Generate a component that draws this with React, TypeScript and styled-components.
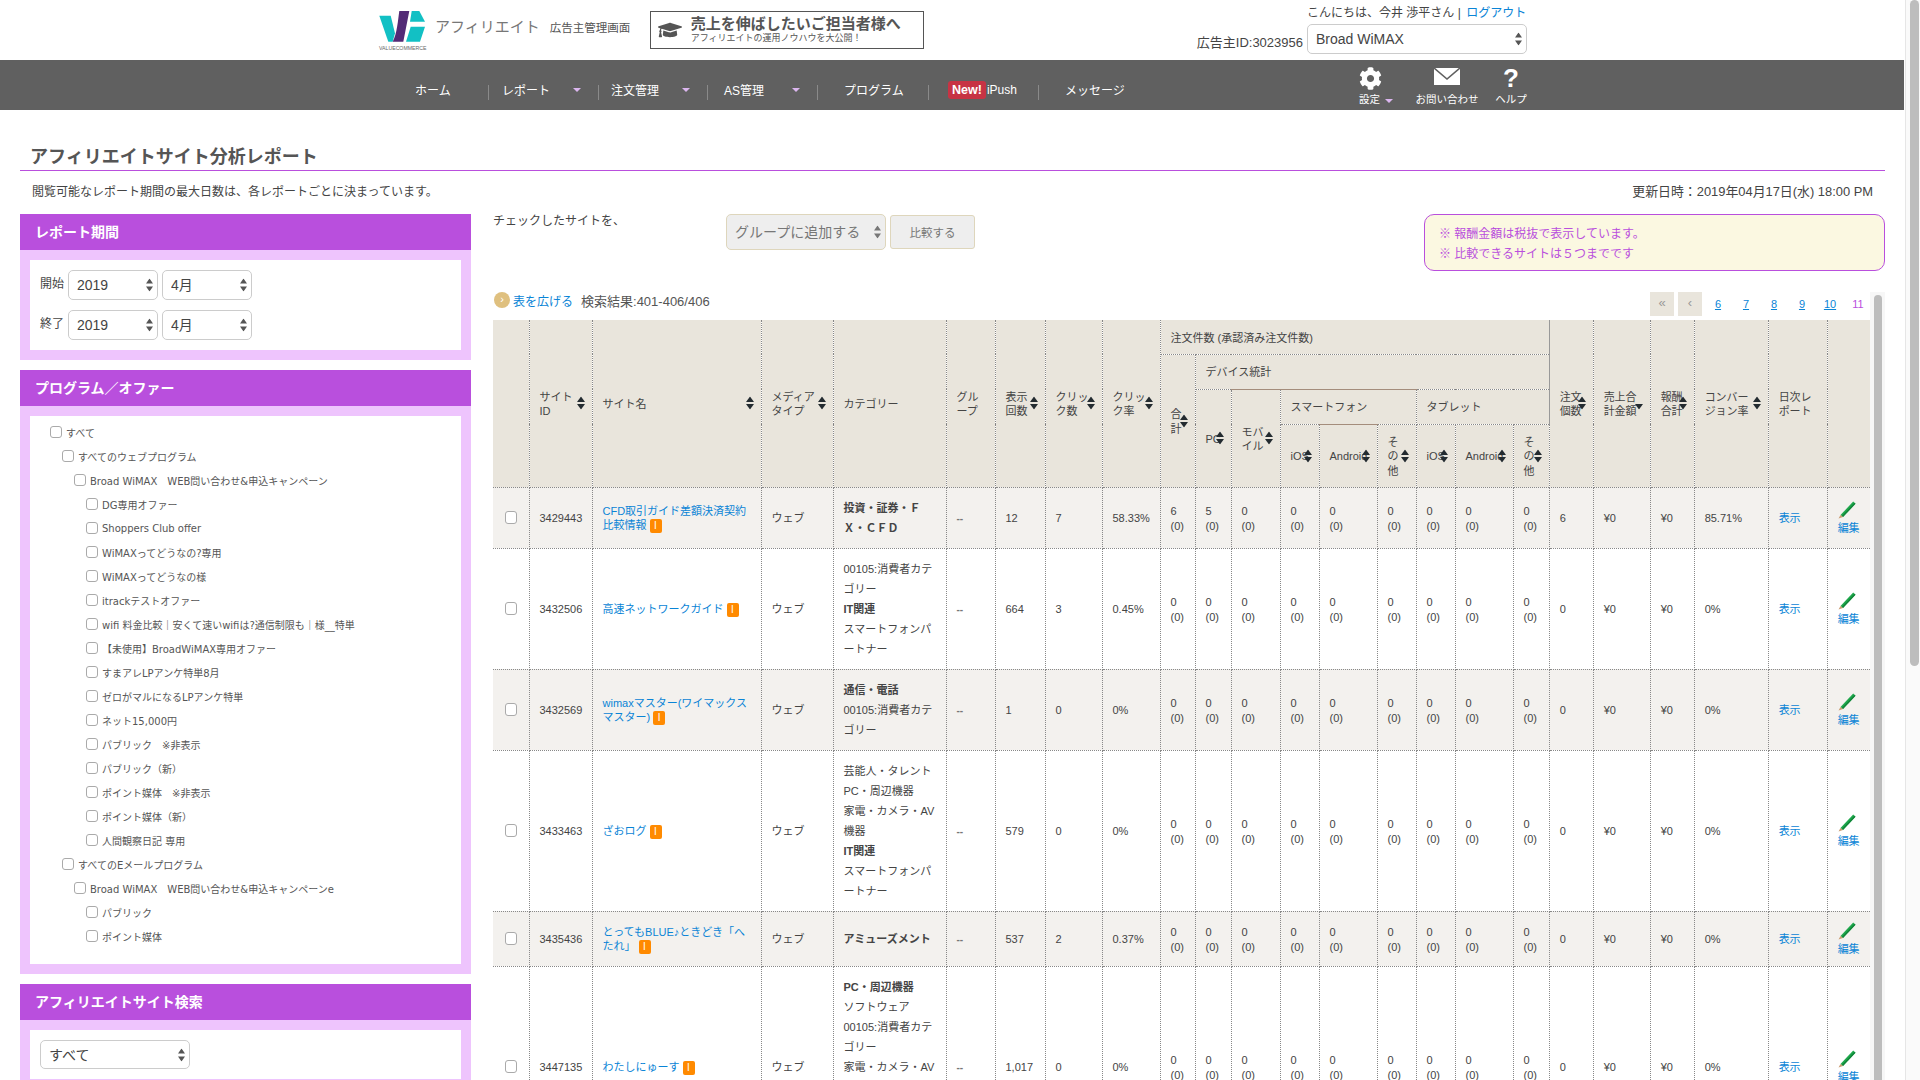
import styled, { createGlobalStyle } from "styled-components";
import { FaCog, FaGraduationCap } from "react-icons/fa";

const GlobalStyle = createGlobalStyle`
    html, body {
        margin: 0;
        padding: 0;
        height: 100%;
        overflow: hidden;
        background: #fff;
        color: #444;
        font-family: "Liberation Sans", "Noto Sans CJK JP", sans-serif;
        font-size: 12px;
    }
    * { box-sizing: border-box; }
    a { color: #0a84d6; text-decoration: none; }
`

const Viewport = styled.div`
    display: flex;
    height: 100vh;
    overflow: hidden;
`

const Page = styled.div`
    width: 1904px;
    flex: none;
`

const PageScroll = styled.div`
    flex: 1;
    margin-left: 1px;
    padding-left: 4px;
    border-left: 1px solid #e6e6e6;
    background: #fafafa;
`

const PageThumb = styled.div`
    width: 9px;
    height: 666px;
    border-radius: 5px;
    background: #bdbdbd;
`

/* header */
const Header = styled.header`
    height: 60px;
    display: flex;
    justify-content: space-between;
    padding: 0 377px 0 378px;
`

const Brand = styled.div`
    display: flex;
    align-items: flex-start;
`

const LogoBox = styled.div`
    width: 50px;
    padding-top: 10px;
    svg { display: block; }
`

const LogoCaption = styled.div`
    font-size: 5.2px;
    line-height: 8px;
    margin: 2px 0 0 1px;
    color: #666;
    white-space: nowrap;
`

const BrandName = styled.div`
    margin: 17px 0 0 7px;
    font-size: 15px;
    line-height: 20px;
    color: #777;
    white-space: nowrap;
`

const BrandSub = styled.div`
    margin: 21px 0 0 10px;
    width: 100px;
    font-size: 11.5px;
    line-height: 14px;
    color: #555;
    white-space: nowrap;
`

const Banner = styled.div`
    width: 274px;
    height: 38px;
    margin-top: 11px;
    display: flex;
    align-items: center;
    gap: 9px;
    padding-left: 7px;
    border: 1px solid #555;
    color: #555;
    svg { font-size: 24px; flex: none; }
`

const BannerTitle = styled.div`
    font-size: 15px;
    line-height: 16px;
    font-weight: bold;
    white-space: nowrap;
`

const BannerSub = styled.div`
    font-size: 9px;
    line-height: 12px;
    white-space: nowrap;
`

const UserBox = styled.div`
    width: 330px;
    display: flex;
    flex-direction: column;
    align-items: flex-end;
    padding-top: 6px;
`

const Greeting = styled.div`
    width: 220px;
    font-size: 12px;
    line-height: 14px;
    white-space: nowrap;
    a { margin-left: 2px; }
`

const AdvertiserRow = styled.div`
    display: flex;
    align-items: flex-end;
    gap: 4px;
    margin-top: 4px;
`

const AdvertiserId = styled.span`
    font-size: 13px;
    line-height: 18px;
    padding-bottom: 2px;
    white-space: nowrap;
`

/* select */
const DropWrap = styled.span<{ $w: number; $muted?: boolean }>`
    position: relative;
    display: inline-block;
    width: ${p => p.$w}px;
    flex: none;
    svg {
        position: absolute;
        right: 5px;
        top: 50%;
        transform: translateY(-50%);
        fill: ${p => p.$muted ? "#777" : "#555"};
    }
`

const DropSelect = styled.select<{ $h: number; $muted?: boolean }>`
    appearance: none;
    display: block;
    width: 100%;
    height: ${p => p.$h}px;
    padding: 0 16px 0 8px;
    font-family: "Liberation Sans", "Noto Sans CJK JP", sans-serif;
    font-size: 14px;
    color: ${p => p.$muted ? "#777" : "#444"};
    background: ${p => p.$muted ? "#eee" : "#fff"};
    border: 1px solid ${p => p.$muted ? "#ded6bc" : "#ccc"};
    border-radius: 5px;
`

function Dropdown(props: { w: number; h: number; value: string; muted?: boolean }) {
    return (
        <DropWrap $w={props.w} $muted={props.muted}>
            <DropSelect $h={props.h} $muted={props.muted} defaultValue={props.value}>
                <option>{props.value}</option>
            </DropSelect>
            <svg width="7" height="13" viewBox="0 0 7 13">
                <path d="M3.5 0L7 5H0zM3.5 13L0 8h7z" />
            </svg>
        </DropWrap>
    )
}

/* nav */
const Nav = styled.nav`
    height: 50px;
    background: #606060;
    color: #fff;
    display: flex;
    align-items: center;
    padding: 0 377px 0 378px;
`

const NavItem = styled.div<{ $w: number; $pad: number; $line?: boolean }>`
    width: ${p => p.$w}px;
    height: 15px;
    margin-top: 14px;
    padding: 0 17px 5px ${p => p.$pad}px;
    display: flex;
    align-items: center;
    justify-content: space-between;
    font-size: 12px;
    white-space: nowrap;
    border-left: ${p => p.$line ? "1px solid #8a8a8a" : "0"};
`

const NavCaret = styled.i`
    width: 0;
    height: 0;
    border-left: 4px solid transparent;
    border-right: 4px solid transparent;
    border-top: 4px solid #dcb6f0;
`

const NewTag = styled.b`
    display: inline-block;
    padding: 0 4px;
    margin-right: 1px;
    line-height: 18px;
    font-size: 12.5px;
    background: #c73344;
    border-radius: 3px;
`

const NavTools = styled.div`
    margin-left: auto;
    display: flex;
    gap: 16px;
`

const Tool = styled.div<{ $w: number; $extra?: number }>`
    width: ${p => p.$w}px;
    height: 42px;
    margin-right: ${p => p.$extra ?? 0}px;
    display: flex;
    flex-direction: column;
    align-items: center;
    justify-content: flex-end;
    font-size: 10.5px;
    line-height: 14px;
    white-space: nowrap;
`

const ToolLabel = styled.span`
    display: flex;
    align-items: center;
    gap: 5px;
    width: 100%;
    i { margin-top: 3px; }
`

const QuestionMark = styled.span`
    font-size: 26px;
    line-height: 27px;
    font-weight: bold;
`

const GearBox = styled.div`
    width: 100%;
    height: 28px;
    padding-top: 3px;
    svg { display: block; font-size: 23px; }
`

const MailIcon = styled.svg`
    margin-bottom: 7px;
`

/* main */
const Main = styled.main`
    padding: 33px 19px 0 20px;
`

const PageTitle = styled.h1`
    margin: 0;
    padding: 2px 0 0 10px;
    height: 28px;
    font-size: 18px;
    line-height: 25px;
    font-weight: bold;
    color: #555;
    border-bottom: 1px solid #b94fdd;
`

const SubRow = styled.div`
    display: flex;
    justify-content: space-between;
    margin: 11px 0 12px;
    padding: 0 12px;
    line-height: 20px;
`

const UpdatedAt = styled.span`
    font-size: 12.9px;
`

const Columns = styled.div`
    display: flex;
    gap: 22px;
    align-items: flex-start;
`

const Side = styled.aside`
    width: 451px;
    flex: none;
`

const Panel = styled.section`
    margin-bottom: 10px;
    background: #eec4fd;
`

const PanelHead = styled.h2`
    margin: 0;
    height: 36px;
    padding-left: 15px;
    background: #b94fdd;
    color: #fff;
    font-size: 14px;
    line-height: 36px;
    font-weight: bold;
`

const PanelFrame = styled.div`
    padding: 10px;
`

const PanelBody = styled.div<{ $pad: string }>`
    padding: ${p => p.$pad};
    background: #fff;
`

const PeriodRow = styled.div`
    display: flex;
    align-items: center;
    gap: 4px;
    margin-bottom: 10px;
    &:last-child { margin-bottom: 0; }
`

const PeriodLabel = styled.span`
    width: 24px;
    font-size: 12px;
    margin-top: -6px;
`

const TreeRow = styled.label<{ $level: number }>`
    display: flex;
    align-items: center;
    gap: 4px;
    height: 24px;
    padding-left: ${p => 20 + p.$level * 12}px;
    font-family: "DejaVu Sans", "Noto Sans CJK JP", sans-serif;
    font-size: 10px;
    color: #555;
    white-space: pre;
`

const Check = styled.input.attrs({ type: "checkbox" })`
    appearance: none;
    width: 12px;
    height: 12px;
    margin: 0;
    flex: none;
    background: #fff;
    border: 1px solid #aaa;
    border-radius: 3px;
`

const Content = styled.div`
    width: 1392px;
    flex: none;
    position: relative;
`

const Toolbar = styled.div`
    display: flex;
    align-items: flex-start;
    height: 57px;
`

const ToolbarText = styled.span`
    width: 233px;
    line-height: 14px;
`

const CompareButton = styled.button`
    width: 85px;
    height: 34px;
    margin: 1px 0 0 4px;
    font-family: inherit;
    font-size: 11.5px;
    color: #777;
    background: #eee;
    border: 1px solid #ded6bc;
    border-radius: 3px;
`

const Notice = styled.div`
    width: 461px;
    height: 57px;
    margin-left: auto;
    padding: 9px 14px;
    line-height: 20px;
    color: #b94fdd;
    background: #fbf8e1;
    border: 1px solid #b94fdd;
    border-radius: 10px;
`

const ResultRow = styled.div`
    width: 1379px;
    height: 24px;
    margin: 21px 0 4px;
    display: flex;
    align-items: center;
`

const ResultInfo = styled.div`
    display: flex;
    align-items: center;
    margin-bottom: 8px;
`

const ExpandIcon = styled.span`
    width: 16px;
    height: 16px;
    margin: 0 3px 0 1px;
    border-radius: 50%;
    background: #dfc07f;
    color: #fff;
    font-size: 11px;
    line-height: 14px;
    text-align: center;
`

const ResultCount = styled.span`
    margin-left: 8px;
    font-size: 13px;
    color: #555;
`

const Pager = styled.div`
    margin-left: auto;
    display: flex;
    align-items: center;
    font-size: 11px;
`

const PagerBox = styled.span`
    width: 24px;
    height: 24px;
    margin-right: 4px;
    background: #e9e5dc;
    color: #999;
    font-size: 13px;
    line-height: 22px;
    text-align: center;
    &:nth-child(2) { margin-right: 2px; }
`

const PagerLink = styled.a<{ $current?: boolean }>`
    width: 28px;
    text-align: center;
    color: ${p => p.$current ? "#b94fdd" : "#0a84d6"};
    span { text-decoration: ${p => p.$current ? "none" : "underline"}; }
`

const InnerScroll = styled.div`
    position: absolute;
    left: 1377px;
    top: 78px;
    width: 15px;
    height: 900px;
    padding-left: 4px;
    background: #f7f7f7;
`

const InnerThumb = styled.div`
    width: 8px;
    height: 100%;
    margin-top: 3px;
    border-radius: 4px;
    background: #bdbdbd;
`

/* table */
const Table = styled.table`
    width: 1377px;
    table-layout: fixed;
    border-collapse: collapse;
    font-size: 11px;
    line-height: 14.3px;
    line-break: loose;
`

const Th = styled.th<{ $solidTop?: boolean; $solidRight?: boolean }>`
    position: relative;
    padding: 10px 10px 8px;
    text-align: left;
    font-weight: normal;
    background: #e9e5dc;
    color: #444;
    border: 1px dotted #888;
    border-top: ${p => p.$solidTop ? "1px solid #a48d7c" : "1px dotted #888"};
    border-right: ${p => p.$solidRight ? "1px solid #999" : "1px dotted #888"};
    thead tr:first-child & { border-top: 0; }
    &:first-child { border-left: 0; }
`

const HeadRow = styled.tr<{ $h: number }>`
    height: ${p => p.$h}px;
`

const SortMark = styled.svg`
    position: absolute;
    right: 7px;
    top: 50%;
    transform: translateY(-50%);
`

const Tr = styled.tr<{ $alt: boolean }>`
    background: ${p => p.$alt ? "#f3f1ee" : "#fff"};
    &:first-child td { border-top: 1px dotted #8a7060; }
`

const Td = styled.td`
    padding: 11px 10px 9px;
    vertical-align: middle;
    border: 1px dotted #888;
    color: #444;
    &:first-child { border-left: 0; }
    &:last-child { border-right: 1px solid #f0f0f0; }
`

const CheckTd = styled(Td)`
    padding: 0 0 0 12px;
    input { display: block; height: 13px; }
`

const CategoryTd = styled(Td)`
    padding: 10px;
`

const EditTd = styled(Td)`
    padding: 10px 2px 10px 10px;
`

const CategoryLine = styled.div<{ $bold?: boolean }>`
    line-height: 20px;
    font-weight: ${p => p.$bold ? "bold" : "normal"};
`

const DashText = styled.span`
    font-weight: bold;
    color: #777;
    font-size: 10px;
`

const InfoBadge = styled.span`
    display: inline-block;
    width: 12px;
    height: 14px;
    margin-left: 3px;
    background: #ff8a00;
    color: #fff;
    border-radius: 2px;
    font-size: 10px;
    line-height: 14px;
    text-align: center;
    vertical-align: middle;
`

const EditIcon = styled.div`
    height: 20px;
    svg { display: block; }
`

const EditLink = styled.a`
    display: block;
    line-height: 14px;
    white-space: nowrap;
`

interface Row {
    id: string;
    name: string;
    category: [string, boolean][];
    views: string;
    clicks: string;
    rate: string;
    counts: [string, string][];
    orders: string;
    cv: string;
}

const zeros = (): [string, string][] => Array.from({ length: 9 }, () => ["0", "(0)"])

const rows: Row[] = [
    {
        id: "3429443", name: "CFD取引ガイド差額決済契約比較情報",
        category: [["投資・証券・ＦＸ・ＣＦＤ", true]],
        views: "12", clicks: "7", rate: "58.33%",
        counts: [["6", "(0)"], ["5", "(0)"], ...zeros().slice(2)],
        orders: "6", cv: "85.71%",
    },
    {
        id: "3432506", name: "高速ネットワークガイド",
        category: [["00105:消費者カテゴリー", false], ["IT関連", true], ["スマートフォンパートナー", false]],
        views: "664", clicks: "3", rate: "0.45%", counts: zeros(), orders: "0", cv: "0%",
    },
    {
        id: "3432569", name: "wimaxマスター(ワイマックスマスター)",
        category: [["通信・電話", true], ["00105:消費者カテゴリー", false]],
        views: "1", clicks: "0", rate: "0%", counts: zeros(), orders: "0", cv: "0%",
    },
    {
        id: "3433463", name: "ざおログ",
        category: [["芸能人・タレント", false], ["PC・周辺機器", false], ["家電・カメラ・AV機器", false], ["IT関連", true], ["スマートフォンパートナー", false]],
        views: "579", clicks: "0", rate: "0%", counts: zeros(), orders: "0", cv: "0%",
    },
    {
        id: "3435436", name: "とってもBLUE♪ときどき「へたれ」",
        category: [["アミューズメント", true]],
        views: "537", clicks: "2", rate: "0.37%", counts: zeros(), orders: "0", cv: "0%",
    },
    {
        id: "3447135", name: "わたしにゅーす",
        category: [["PC・周辺機器", true], ["ソフトウェア", false], ["00105:消費者カテゴリー", false], ["家電・カメラ・AV機器", false], ["IT関連", true], ["スマートフォンパートナー", false]],
        views: "1,017", clicks: "0", rate: "0%", counts: zeros(), orders: "0", cv: "0%",
    },
]

const colWidths = [36, 63, 169, 72, 113, 49, 50, 57, 58, 35, 36, 49, 39, 58, 39, 39, 58, 36, 44, 57, 44, 74, 59, 43]

const programs: [number, string][] = [
    [0, "すべて"],
    [1, "すべてのウェブプログラム"],
    [2, "Broad WiMAX　WEB問い合わせ&申込キャンペーン"],
    [3, "DG専用オファー"],
    [3, "Shoppers Club offer"],
    [3, "WiMAXってどうなの?専用"],
    [3, "WiMAXってどうなの様"],
    [3, "itrackテストオファー"],
    [3, "wifi 料金比較｜安くて速いwifiは?通信制限も｜様__特単"],
    [3, "【未使用】BroadWiMAX専用オファー"],
    [3, "すまアレLPアンケ特単8月"],
    [3, "ゼロがマルになるLPアンケ特単"],
    [3, "ネット15,000円"],
    [3, "パブリック　※非表示"],
    [3, "パブリック（新）"],
    [3, "ポイント媒体　※非表示"],
    [3, "ポイント媒体（新）"],
    [3, "人間観察日記 専用"],
    [1, "すべてのEメールプログラム"],
    [2, "Broad WiMAX　WEB問い合わせ&申込キャンペーンe"],
    [3, "パブリック"],
    [3, "ポイント媒体"],
]

function HeadCell(props: {
    label?: string;
    rows?: number;
    cols?: number;
    sort?: "both" | "down";
    solidTop?: boolean;
    solidRight?: boolean;
}) {
    return (
        <Th rowSpan={props.rows} colSpan={props.cols} $solidTop={props.solidTop} $solidRight={props.solidRight}>
            {props.label}
            {props.sort && (
                <SortMark width="8" height="13" viewBox="0 0 8 13">
                    {props.sort === "both" && <path d="M4 0L8 5.5H0z" fill="#232b30" />}
                    <path d="M4 13L0 7.5h8z" fill="#232b30" />
                </SortMark>
            )}
        </Th>
    )
}

function Pencil() {
    return (
        <svg width="18" height="18" viewBox="0 0 18 18">
            <path d="M2.5 14L15.2.6l2.3 2.2L5 16z" fill="#1ea84c" />
            <path d="M3.8 15L16.4 1.7l1.1 1.1L5 16z" fill="#12863a" />
            <path d="M.5 17.6L2.5 14 5 16z" fill="#c99b70" />
        </svg>
    )
}

function App() {
    return (
        <Viewport>
            <GlobalStyle />
            <Page>
                <Header>
                    <Brand>
                        <LogoBox>
                            <svg width="50" height="32" viewBox="0 0 50 32">
                                <path d="M1.3 5.7H12.7L17 23.3 14.7 31.7H10.3z" fill="#12c0c4" />
                                <path d="M21.3 1H31.3L25.3 31.7H14.7C19 24 20 10 21.3 1z" fill="#532a76" />
                                <path d="M33.7 1H41.3L47 11.7H32z" fill="#12c0c4" />
                                <path d="M32.7 16.7H47L42 31.7H28z" fill="#12c0c4" />
                            </svg>
                            <LogoCaption>VALUECOMMERCE</LogoCaption>
                        </LogoBox>
                        <BrandName>アフィリエイト</BrandName>
                        <BrandSub>広告主管理画面</BrandSub>
                        <Banner>
                            <FaGraduationCap />
                            <div>
                                <BannerTitle>売上を伸ばしたいご担当者様へ</BannerTitle>
                                <BannerSub>アフィリエイトの運用ノウハウを大公開！</BannerSub>
                            </div>
                        </Banner>
                    </Brand>
                    <UserBox>
                        <Greeting>こんにちは、今井 渉平さん | <a href="#">ログアウト</a></Greeting>
                        <AdvertiserRow>
                            <AdvertiserId>広告主ID:3023956</AdvertiserId>
                            <Dropdown w={220} h={30} value="Broad WiMAX" />
                        </AdvertiserRow>
                    </UserBox>
                </Header>
                <Nav>
                    <NavItem $w={110} $pad={37}>ホーム</NavItem>
                    <NavItem $w={110} $pad={13} $line>レポート<NavCaret /></NavItem>
                    <NavItem $w={109} $pad={12} $line>注文管理<NavCaret /></NavItem>
                    <NavItem $w={110} $pad={16} $line>AS管理<NavCaret /></NavItem>
                    <NavItem $w={111} $pad={26} $line>プログラム</NavItem>
                    <NavItem $w={110} $pad={19} $line><span><NewTag>New!</NewTag>iPush</span></NavItem>
                    <NavItem $w={110} $pad={26} $line>メッセージ</NavItem>
                    <NavTools>
                        <Tool $w={33} $extra={7}>
                            <GearBox><FaCog /></GearBox>
                            <ToolLabel>設定<NavCaret /></ToolLabel>
                        </Tool>
                        <Tool $w={64}>
                            <MailIcon width="26" height="17" viewBox="0 0 26 17">
                                <path d="M0 0H26V17H0z" fill="#fff" />
                                <path d="M0 0L13 11 26 0" fill="none" stroke="#606060" strokeWidth="1.6" />
                            </MailIcon>
                            お問い合わせ
                        </Tool>
                        <Tool $w={32}>
                            <QuestionMark>?</QuestionMark>
                            ヘルプ
                        </Tool>
                    </NavTools>
                </Nav>
                <Main>
                    <PageTitle>アフィリエイトサイト分析レポート</PageTitle>
                    <SubRow>
                        <span>閲覧可能なレポート期間の最大日数は、各レポートごとに決まっています。</span>
                        <UpdatedAt>更新日時：2019年04月17日(水) 18:00 PM</UpdatedAt>
                    </SubRow>
                    <Columns>
                        <Side>
                            <Panel>
                                <PanelHead>レポート期間</PanelHead>
                                <PanelFrame>
                                    <PanelBody $pad="10px">
                                        <PeriodRow>
                                            <PeriodLabel>開始</PeriodLabel>
                                            <Dropdown w={90} h={30} value="2019" />
                                            <Dropdown w={90} h={30} value="4月" />
                                        </PeriodRow>
                                        <PeriodRow>
                                            <PeriodLabel>終了</PeriodLabel>
                                            <Dropdown w={90} h={30} value="2019" />
                                            <Dropdown w={90} h={30} value="4月" />
                                        </PeriodRow>
                                    </PanelBody>
                                </PanelFrame>
                            </Panel>
                            <Panel>
                                <PanelHead>プログラム／オファー</PanelHead>
                                <PanelFrame>
                                    <PanelBody $pad="4px 0 16px">
                                        {programs.map(([level, label], i) => (
                                            <TreeRow key={i} $level={level}>
                                                <Check />
                                                {label}
                                            </TreeRow>
                                        ))}
                                    </PanelBody>
                                </PanelFrame>
                            </Panel>
                            <Panel>
                                <PanelHead>アフィリエイトサイト検索</PanelHead>
                                <PanelFrame>
                                    <PanelBody $pad="10px">
                                        <Dropdown w={150} h={29} value="すべて" />
                                    </PanelBody>
                                </PanelFrame>
                            </Panel>
                        </Side>
                        <Content>
                            <Toolbar>
                                <ToolbarText>チェックしたサイトを、</ToolbarText>
                                <Dropdown w={160} h={36} value="グループに追加する" muted />
                                <CompareButton>比較する</CompareButton>
                                <Notice>
                                    <div>※ 報酬金額は税抜で表示しています。</div>
                                    <div>※ 比較できるサイトは５つまでです</div>
                                </Notice>
                            </Toolbar>
                            <ResultRow>
                                <ResultInfo>
                                    <ExpandIcon>›</ExpandIcon>
                                    <a href="#">表を広げる</a>
                                    <ResultCount>検索結果:401-406/406</ResultCount>
                                </ResultInfo>
                                <Pager>
                                    <PagerBox>«</PagerBox>
                                    <PagerBox>‹</PagerBox>
                                    {["6", "7", "8", "9", "10"].map(n => (
                                        <PagerLink key={n} href="#"><span>{n}</span></PagerLink>
                                    ))}
                                    <PagerLink $current><span>11</span></PagerLink>
                                </Pager>
                            </ResultRow>
                            <Table>
                                <colgroup>
                                    {colWidths.map((w, i) => <col key={i} width={w} />)}
                                </colgroup>
                                <thead>
                                    <HeadRow $h={34}>
                                        <HeadCell rows={4} />
                                        <HeadCell rows={4} label="サイトID" sort="both" />
                                        <HeadCell rows={4} label="サイト名" sort="both" />
                                        <HeadCell rows={4} label="メディアタイプ" sort="both" />
                                        <HeadCell rows={4} label="カテゴリー" />
                                        <HeadCell rows={4} label="グループ" />
                                        <HeadCell rows={4} label="表示回数" sort="both" />
                                        <HeadCell rows={4} label="クリック数" sort="both" />
                                        <HeadCell rows={4} label="クリック率" sort="both" />
                                        <HeadCell cols={9} label="注文件数 (承認済み注文件数)" solidRight />
                                        <HeadCell rows={4} label="注文個数" sort="both" />
                                        <HeadCell rows={4} label="売上合計金額" sort="down" />
                                        <HeadCell rows={4} label="報酬合計" sort="both" />
                                        <HeadCell rows={4} label="コンバージョン率" sort="both" />
                                        <HeadCell rows={4} label="日次レポート" />
                                        <HeadCell rows={4} />
                                    </HeadRow>
                                    <HeadRow $h={35}>
                                        <HeadCell rows={3} label="合計" sort="both" />
                                        <HeadCell cols={8} label="デバイス統計" solidRight />
                                    </HeadRow>
                                    <HeadRow $h={35}>
                                        <HeadCell rows={2} label="PC" sort="both" />
                                        <HeadCell rows={2} label="モバイル" sort="both" solidTop />
                                        <HeadCell cols={3} label="スマートフォン" solidTop />
                                        <HeadCell cols={3} label="タブレット" solidRight />
                                    </HeadRow>
                                    <HeadRow $h={63}>
                                        <HeadCell label="iOS" sort="both" />
                                        <HeadCell label="Android" sort="both" solidTop />
                                        <HeadCell label="その他" sort="both" />
                                        <HeadCell label="iOS" sort="both" />
                                        <HeadCell label="Android" sort="both" />
                                        <HeadCell label="その他" sort="both" />
                                    </HeadRow>
                                </thead>
                                <tbody>
                                    {rows.map((row, i) => (
                                        <Tr key={row.id} $alt={i % 2 === 0}>
                                            <CheckTd><Check /></CheckTd>
                                            <Td>{row.id}</Td>
                                            <Td><a href="#">{row.name}</a><InfoBadge>I</InfoBadge></Td>
                                            <Td>ウェブ</Td>
                                            <CategoryTd>
                                                {row.category.map(([text, bold]) => (
                                                    <CategoryLine key={text} $bold={bold}>{text}</CategoryLine>
                                                ))}
                                            </CategoryTd>
                                            <Td><DashText>--</DashText></Td>
                                            <Td>{row.views}</Td>
                                            <Td>{row.clicks}</Td>
                                            <Td>{row.rate}</Td>
                                            {row.counts.map(([count, approved], c) => (
                                                <Td key={c}>{count}<br />{approved}</Td>
                                            ))}
                                            <Td>{row.orders}</Td>
                                            <Td>¥0</Td>
                                            <Td>¥0</Td>
                                            <Td>{row.cv}</Td>
                                            <Td><a href="#">表示</a></Td>
                                            <EditTd>
                                                <EditIcon><Pencil /></EditIcon>
                                                <EditLink href="#">編集</EditLink>
                                            </EditTd>
                                        </Tr>
                                    ))}
                                </tbody>
                            </Table>
                            <InnerScroll><InnerThumb /></InnerScroll>
                        </Content>
                    </Columns>
                </Main>
            </Page>
            <PageScroll><PageThumb /></PageScroll>
        </Viewport>
    )
}

export default App
